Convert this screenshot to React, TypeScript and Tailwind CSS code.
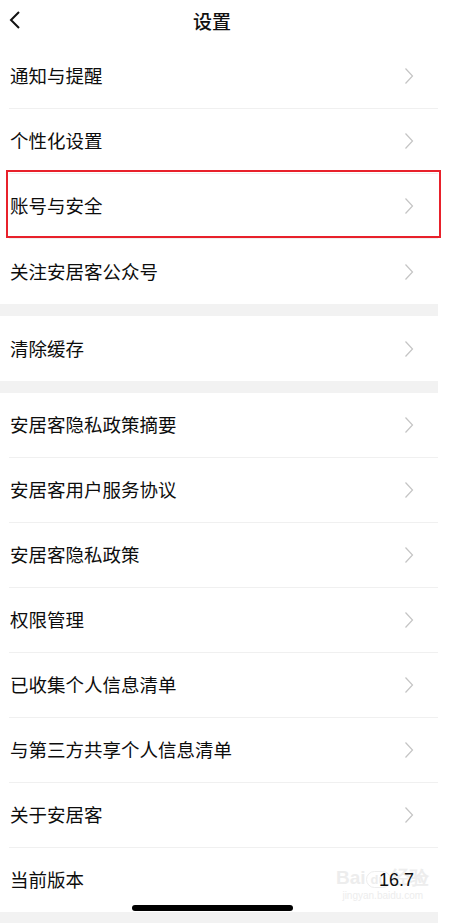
const groups: string[][] = [
  ["通知与提醒", "个性化设置", "账号与安全", "关注安居客公众号"],
  ["清除缓存"],
  [
    "安居客隐私政策摘要",
    "安居客用户服务协议",
    "安居客隐私政策",
    "权限管理",
    "已收集个人信息清单",
    "与第三方共享个人信息清单",
    "关于安居客",
  ],
];

function Chevron() {
  return (
    <svg width="10" height="18" viewBox="0 0 10 18" className="shrink-0">
      <polyline points="1.5,1.5 8.5,9 1.5,16.5" fill="none" stroke="#c4c4c4" strokeWidth="1.2" />
    </svg>
  );
}

function Row({ label, last }: { label: string; last?: boolean }) {
  const highlight = label === "账号与安全";
  return (
    <div className="relative pl-[9px]">
      <div
        className={
          "flex h-[65px] items-center justify-between pr-[24px] " +
          (last ? "" : "border-b border-[#f0f0f0]")
        }
      >
        <span className="pl-px text-[18.5px] text-[#0d0d0d]">{label}</span>
        <Chevron />
      </div>
      {highlight && (
        <div className="pointer-events-none absolute left-[6px] -right-[3px] -top-[4px] bottom-[1px] border-2 border-[#e8212b]" />
      )}
    </div>
  );
}

export default function App() {
  return (
    <div className="relative h-[923px] w-[452px] overflow-hidden bg-white font-['Noto_Sans_CJK_SC',sans-serif]">
      <div className="absolute left-[336px] top-[868px] flex flex-col items-center leading-none text-[#ededed]">
        <span className="text-[19px] font-bold font-['Liberation_Sans',sans-serif]">
          Bai<span className="rounded-full border border-[#ededed] px-1 text-[13px]">du</span>经验
        </span>
        <span className="mt-[4px] text-[10px] font-['Liberation_Sans',sans-serif]">jingyan.baidu.com</span>
      </div>

      <div className="relative w-[438px]">
        <header className="relative flex h-[42px] items-center justify-center pr-[14px]">
          <svg width="14" height="20" viewBox="0 0 14 20" className="absolute left-[8px] top-[10px]">
            <polyline points="11,2 3,10 11,18" fill="none" stroke="#111" strokeWidth="2" />
          </svg>
          <span className="text-[19px] font-medium text-[#111]">设置</span>
        </header>
        <div className="h-[2px]" />

        {groups.map((g, gi) => (
          <div key={gi}>
            {gi > 0 && <div className="h-[12px] bg-[#f2f2f2]" />}
            {g.map((label, i) => (
              <Row key={label} label={label} last={i === g.length - 1 && gi < 2} />
            ))}
          </div>
        ))}

        <div className="flex h-[64px] items-center justify-between pl-[10px] pr-[24px]">
          <span className="text-[18.5px] text-[#0d0d0d]">当前版本</span>
          <span className="text-[18px] text-[#0d0d0d] font-['Liberation_Sans',sans-serif]">16.7</span>
        </div>
        <div className="h-[20px] bg-[#f2f2f2]" />
      </div>

      <div className="absolute left-[132px] top-[905px] h-[6px] w-[161px] rounded-full bg-black" />
    </div>
  );
}
